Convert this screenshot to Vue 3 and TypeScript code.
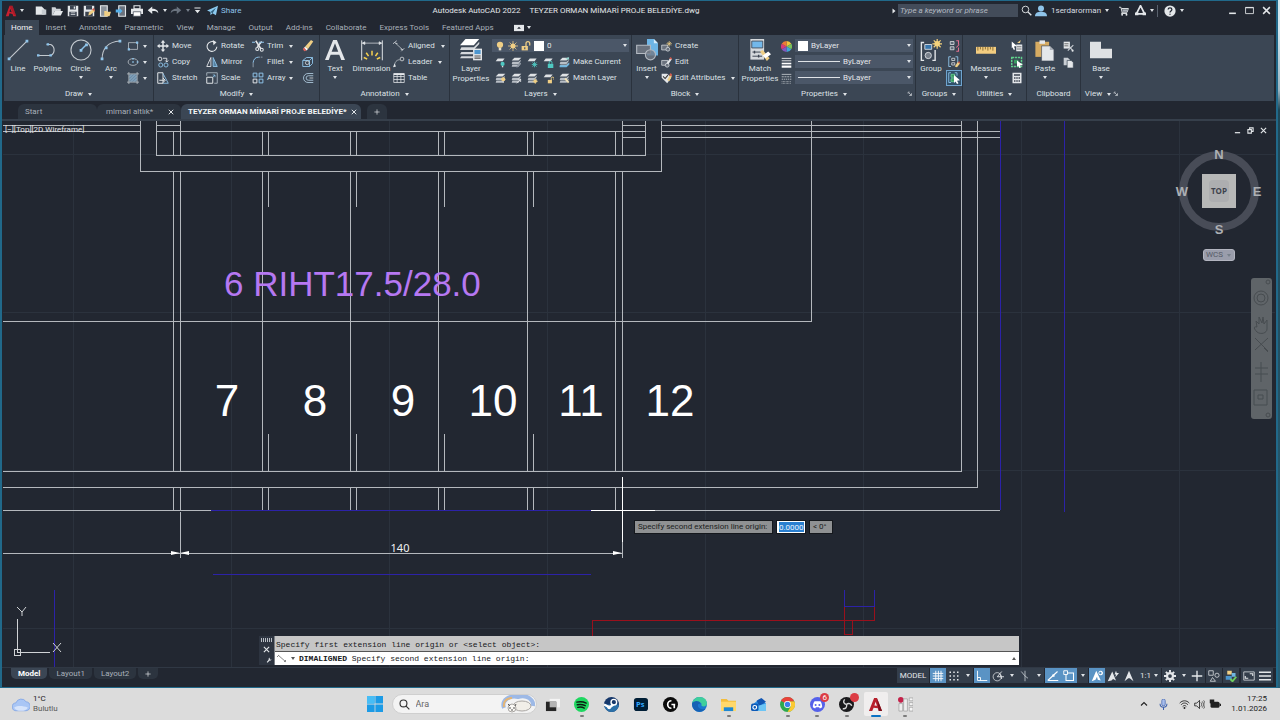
<script setup lang="ts">
import { h, ref } from 'vue'

const W = '#e4e7ea'
const B = '#8fc4ea'
const Y = '#f0cf85'

const layer = (extra: string) =>
  `<path d="M4 2h10l-3 4H1z" fill="#dfe2e5"/>${extra}`
const stack = (extra: string) =>
  `<path d="M5 1h10l-4 4H1z" fill="#dfe2e5"/><path d="M2 7h9l3-3v2l-3 4H1zM2 11h9l3-3v2l-3 4H1z" fill="#b9bfc6"/>${extra}`
const bulb = (x: number, y: number, c: string) =>
  `<circle cx="${x}" cy="${y}" r="3" fill="${c}"/><path d="M${x - 1} ${y + 3}h2v2h-2z" fill="#ddd"/>`

const icons: Record<string, string> = {
  acad: `<path d="M1 15 6 1h4l5 14h-4l-1-3-4-1-1 4z" fill="#c8202f"/><path d="M7 5l-1 4 3 .5z" fill="#222731"/><path d="M6 1h4l5 14-3-2z" fill="#8e1320" opacity=".5"/>`,
  newf: `<path d="M1 2h8l4 4v7H1z" fill="${W}"/><path d="M9 2v4h6v7H9z" fill="#c6cbd1"/>`,
  open: `<path d="M1 3h5l1 2h6v3H5l-3 6H1z" fill="#cfd3d8"/><path d="M5 8h11l-3 6H2z" fill="${W}"/>`,
  save: `<path d="M1 1h14v14H1z" fill="${W}"/><path d="M4 1h8v5H4zM3 9h10v6H3z" fill="#3b4350"/><path d="M5 10h6v1H5zM5 12h6v1H5zM9 2h2v3H9z" fill="${W}"/>`,
  saveas: `<path d="M1 1h14v14H1z" fill="${W}"/><path d="M4 1h8v5H4zM3 9h10v6H3z" fill="#3b4350"/><path d="M7 14l1-4 6-5 2 3-6 5z" fill="${Y}"/><path d="M12 6l2-2 2 3-1 1z" fill="#d35b4e"/>`,
  web: `<path d="M2 1h9v14H2z" fill="#8b939d" stroke="${W}" stroke-width="1.500"/><path d="M7 8h3l1 1h5l-2 6H7z" fill="${Y}"/>`,
  mobile: `<path d="M5 1h9v14H5z" fill="#6a727e" stroke="${W}" stroke-width="1.500"/><path d="M1 6h5V4l4 4-4 4v-2H1z" fill="#55b0ea"/>`,
  print: `<path d="M4 1h8v4H4z" fill="none" stroke="${W}" stroke-width="1.500"/><path d="M0 5h16v7H0z" fill="${W}"/><path d="M3 9h10v6H3z" fill="#fff" stroke="#444c58"/>`,
  undo: `<path d="M1 7l6-5v3c5 0 8 2 8 6-2-3-4-3-8-3v4z" fill="${W}"/>`,
  redo: `<path d="M15 7L9 2v3C4 5 1 7 1 11c2-3 4-3 8-3v4z" fill="#6a737f"/>`,
  qat: `<path d="M1 1h14v2.500H1zM2 7h12l-6 7z" fill="${W}"/>`,
  plane: `<path d="M0 8 16 1l-3 14-5-3-3 3v-5z" fill="#8ccaf0"/><path d="M5 10l8-6-5 8z" fill="#31617f"/>`,
  mag: `<circle cx="6.500" cy="6.500" r="4.800" fill="none" stroke="${W}" stroke-width="1.300"/><path d="M10 10l5 5" stroke="${W}" stroke-width="2"/>`,
  user: `<circle cx="8" cy="4.500" r="4" fill="${B}"/><path d="M0 15c0-5 4-6 8-6s8 1 8 6z" fill="${B}"/>`,
  cart: `<path d="M0 2h3l2 8h8l2-6H4M5 10l-1 2h9" fill="none" stroke="${W}" stroke-width="1.500"/><path d="M5 5h9l-1 4H6z" fill="#aab0b8"/><circle cx="5" cy="14" r="1.500" fill="${W}"/><circle cx="12" cy="14" r="1.500" fill="${W}"/>`,
  adsk: `<path d="M8 1l6 12H2z" fill="none" stroke="${W}" stroke-width="2.500"/><path d="M0 11h5v4H0zM11 11h5v4h-5z" fill="${W}"/>`,
  help: `<circle cx="8" cy="8" r="7.500" fill="${W}"/><path d="M5.500 6c0-3 5-3 5 0 0 2-2.500 2-2.500 4M8 11.500v1.500" fill="none" stroke="#222731" stroke-width="1.700"/>`,
  min: `<path d="M2 13h12" stroke="${W}" stroke-width="2.800"/>`,
  max: `<path d="M1 2.500h14v11H1z" fill="none" stroke="${W}" stroke-width="1.500"/><path d="M1 3h14" stroke="${W}" stroke-width="2"/>`,
  restore: `<path d="M2 6h8v8H2zM6 5V2h8v8h-3" fill="none" stroke="${W}" stroke-width="2.400"/>`,
  close: `<path d="M2 2l12 12M14 2L2 14" stroke="${W}" stroke-width="2.600"/>`,
  play: `<path d="M5 3l6 5-6 5z" fill="${W}"/>`,
  rib: `<path d="M0 3h16v10H0z" fill="${W}"/><path d="M5 9l3-3 3 3z" fill="#222731"/>`,
  line: `<path d="M1.500 14.500 14.500 1.500" stroke="#c3c9cf" stroke-width=".8"/><path d="M.5 13.500h2v2h-2zM13.500.5h2v2h-2z" fill="${B}"/>`,
  pline: `<path d="M1 12h9a4.500 4.500 0 0 0 0-8H7" fill="none" stroke="#c3c9cf" stroke-width=".8"/><path d="M0 11h1.800v1.800H0zM9 11h1.800v1.800H9zM7 3h1.800v1.800H7z" fill="${B}"/>`,
  circle: `<circle cx="8" cy="8" r="7.300" fill="none" stroke="#c3c9cf" stroke-width=".8"/><path d="M8 8l4-4" stroke="${B}"/><path d="M7 7.200h2v2H7zM11 3.200h2v2h-2z" fill="${B}"/>`,
  arc: `<path d="M1.500 15C1.500 7 6 2 14.500 1.500" fill="none" stroke="#c3c9cf" stroke-width=".8"/><path d="M.5 13.500h2v2h-2zM3.500 5.500h2v2h-2zM13.500.5h2v2h-2z" fill="${B}"/>`,
  rect: `<path d="M2 3.500h12v9H2z" fill="none" stroke="#c3c9cf"/><path d="M1 11h3v3H1zM12 2h3v3h-3z" fill="${B}"/>`,
  ell: `<ellipse cx="8" cy="8" rx="6.500" ry="4.500" fill="none" stroke="#c3c9cf"/><path d="M7 7h2v2H7zM7 2.500h2v2H7zM13 7h2v2h-2z" fill="${B}"/>`,
  hatch: `<path d="M3 3h10v10H3z" fill="#6d8ca6"/><path d="M3 7l4-4M3 11l8-8M5 13l8-8M9 13l4-4" stroke="#9fc4e0" stroke-width=".8"/><path d="M0 2.500h16M0 13.500h16M2.500 0v16M13.500 0v16" stroke="#c3c9cf"/>`,
  move: `<path d="M8 0l3 3.500H9V7h3.500V5L16 8l-3.500 3V9H9v3.500h2L8 16l-3-3.500h2V9H3.500v2L0 8l3.500-3v2H7V3.500H5z" fill="${W}"/>`,
  copy: `<circle cx="4" cy="4" r="2.500" fill="none" stroke="${W}" stroke-width="1.200"/><circle cx="5" cy="12" r="2.700" fill="none" stroke="${B}" stroke-width="1.200"/><circle cx="12" cy="12" r="2.700" fill="none" stroke="${B}" stroke-width="1.200"/><path d="M8 3h5v5M11 6l2 2 2-2" fill="none" stroke="${W}" stroke-width="1.200"/>`,
  stretch: `<path d="M1 1h7v14H1z" fill="none" stroke="${W}" stroke-width="1.300"/><path d="M8 2l7 13H8" fill="none" stroke="${B}" stroke-width="1.200"/><path d="M3 11h7M8 8l3 3-3 3" fill="none" stroke="${W}" stroke-width="1.300"/>`,
  rotate: `<path d="M12 3.500A6.500 6.500 0 1 0 14.500 9" fill="none" stroke="${W}" stroke-width="1.400"/><path d="M9 0l5 3-4 4z" fill="${W}"/>`,
  mirror: `<path d="M6.500 2v12H1z" fill="none" stroke="${W}" stroke-width="1.200"/><path d="M9.500 2v12H15z" fill="#55809f" stroke="${B}" stroke-width="1.200"/>`,
  scale: `<path d="M1 7h8v8H1z" fill="none" stroke="${W}" stroke-width="1.300"/><path d="M1 5V1h14v14h-4" fill="none" stroke="#a9b6c1" stroke-width="1.200"/><path d="M9 7l3-3M9 4h3v3" fill="none" stroke="${B}"/>`,
  trim: `<path d="M5 1l7 11M13 2L7 9" stroke="${W}" stroke-width="2"/><circle cx="7" cy="12" r="2" fill="none" stroke="${W}" stroke-width="1.400"/><circle cx="13" cy="13" r="2" fill="none" stroke="${W}" stroke-width="1.400"/><path d="M0 3h4M9 3h7" stroke="${B}" stroke-width="1.400"/>`,
  fillet: `<path d="M1.500 15V9" stroke="#a9b6c1"/><path d="M1.500 9C2 4 5 1.500 9 1.500" fill="none" stroke="${B}" stroke-width="1.300"/><path d="M9 1.500h6" stroke="#a9b6c1" stroke-dasharray="2 1"/>`,
  array: `<g fill="none" stroke-width="1.300"><path d="M1.500 9.500h5v5h-5z" stroke="${W}"/><path d="M1.500 1.500h5v5h-5zM9.500 1.500h5v5h-5zM9.500 9.500h5v5h-5z" stroke="${B}"/></g>`,
  erase: `<path d="M4 9l8-9 3 2-7 10z" fill="${Y}"/><path d="M2 11l2-2 4 3-2 2z" fill="#fff"/><path d="M1 12l2-2 3 4-3 1z" fill="#d9625b"/>`,
  explode: `<path d="M1 6l5-4h8v8l-4 4H1zM1 6h9v8M10 6l4-4" fill="none" stroke="${B}" stroke-width="1.200"/><circle cx="7" cy="9" r="2.500" fill="none" stroke="${W}"/>`,
  offset: `<path d="M15 2H8a6 6 0 0 0 0 12h7M15 5H8.500a3 3 0 0 0 0 6H15" fill="none" stroke="#a9c4d8" stroke-width="1.200"/><path d="M10 8h5" stroke="${W}"/>`,
  text: `<path d="M0 16 6.500 0h3L16 16h-3l-1.600-4.300H4.500L3 16zM5.300 9.300h5.300L8 2.500z" fill="${W}"/>`,
  dim: `<path d="M.5 1v14.500M15.500 1v14.500" stroke="${W}" stroke-width=".7"/><path d="M1 3h14M1 3l1.800-1v2zM15 3l-1.800-1v2z" fill="${W}" stroke="${W}" stroke-width=".5"/><path d="M8 12V8.500M5.500 12.500 3.800 10M10.500 12.500l1.700-2.500M4.500 14.500 2 13.500M11.500 14.500l2.500-1" stroke="#f5d04f" stroke-width="1.100"/>`,
  aligned: `<path d="M3 4l10 9" stroke="#c3c9cf"/><path d="M0 5l5-4M11 15l4-4M3 4l3 1M13 13l-3-1" stroke="${W}"/>`,
  leader: `<path d="M2 14C2 8 5 5 9 5" fill="none" stroke="#c3c9cf"/><path d="M0 15l2-5 2 4z" fill="${W}"/><circle cx="12" cy="4" r="2.500" fill="none" stroke="${W}"/>`,
  table: `<path d="M1 2h14v12H1zM1 6h14M1 10h14M5.500 2v12M10.500 2v12" fill="none" stroke="${W}"/><path d="M1 2h14v2H1z" fill="${W}"/>`,
  layerprop: `<path d="M4 0h10l-4 4.500H0z" fill="#fff"/><path d="M1 6h9l4-4v1.600L10 8H0zM1 9.500h8.500V11H0zM1 12.500h8.500V14H0z" fill="#d5d8dc"/><path d="M9.500 7H16v8.500H9.500z" fill="${W}"/><path d="M10.500 8h4.500v3h-4.500z" fill="#4c96cf"/><path d="M10.500 12H15v.8h-4.500zM10.500 13.500H15v.8h-4.500z" fill="#555"/>`,
  bulb: `<circle cx="8" cy="6" r="5" fill="${Y}"/><path d="M6 11h4v4H6z" fill="#e6e0cf"/>`,
  sun: `<circle cx="8" cy="8" r="4" fill="${Y}"/><path d="M8 0v16M0 8h16M2.500 2.500l11 11M13.500 2.500l-11 11" stroke="${Y}" stroke-width="1.200"/>`,
  lock: `<path d="M1 8h10v7H1z" fill="${Y}"/><path d="M8 8V4a3 3 0 0 1 6 0v3" fill="none" stroke="${Y}" stroke-width="2"/><path d="M5 10h2v3H5z" fill="#4b5768"/>`,
  l1: layer(bulb(11, 10, '#4fc9c2')),
  l2: stack(`<path d="M8 15l6-6" stroke="#8b93a0" stroke-width="2"/>`),
  l3: layer(`<path d="M11 7v8M7 11h8M8 8l6 6M14 8l-6 6" stroke="#4fc9c2" stroke-width="1.300"/>`),
  l4: layer(`<path d="M7 10h8v6H7z" fill="#4fc9c2"/><path d="M9 10V8a2 2 0 0 1 4 0v2" fill="none" stroke="#4fc9c2" stroke-width="1.400"/>`),
  l5: stack(`<path d="M1 12h10l4-4v3l-4 4H1z" fill="#6fb6e0"/><path d="M9 3l5-3 1 4z" fill="#8fd6cf"/>`),
  m1: stack(bulb(12, 9, Y)),
  m2: stack(`<path d="M8 15l6-6M10 9h4v4" stroke="#dfe2e5" fill="none" stroke-width="1.300"/>`),
  m3: stack(`<circle cx="12" cy="12" r="2.500" fill="${Y}"/><path d="M12 8v8M8 12h8" stroke="${Y}"/>`),
  m4: layer(`<path d="M7 10h6v5H7z" fill="${Y}"/><path d="M12 10V8a2 2 0 0 1 4 0v2" fill="none" stroke="${Y}" stroke-width="1.400"/>`),
  m5: stack(`<path d="M8 9l2-2 5 6-2 2z" fill="#f2e3b8"/>`),
  insert: `<path d="M8 0h5l3 3v9H8z" fill="#6db5e6"/><path d="M13 0l3 3h-3z" fill="#d4ebfa"/><path d="M.5 4.500h10v6H.5z" fill="#6a727e" stroke="#b4bac2" stroke-width=".8"/><circle cx="10.500" cy="11.500" r="3.700" fill="#737b87" fill-opacity=".8" stroke="#b4bac2" stroke-width=".8"/>`,
  create: `<path d="M1 6h9v7H1z" fill="#6a727e" stroke="${W}"/><circle cx="10" cy="12" r="2.800" fill="#6a727e" stroke="${W}"/><path d="M12 0v8M8 4h8M9.500 1.500l5 5M14.500 1.500l-5 5" stroke="${Y}"/>`,
  edit: `<path d="M1 5h9v7H1z" fill="#6a727e" stroke="${W}"/><circle cx="9" cy="12" r="2.800" fill="#6a727e" stroke="${W}"/><path d="M8 9l5-7 3 1-5 7z" fill="${W}"/><path d="M12 2l2-2 2 2-1 2z" fill="#d35b4e"/>`,
  attr: `<path d="M1 1h8l6 6-6 8-8-8z" fill="${W}"/><path d="M3 5l3 3 4-5" fill="none" stroke="#333" stroke-width="1.500"/><path d="M9 10l4-7 3 1-4 8z" fill="${Y}"/><path d="M12 3l2-3 2 2-1 3z" fill="#d35b4e"/>`,
  match: `<path d="M1 0h10v15H1z" fill="#d5d9dd"/><path d="M2 1.500h8v5H2z" fill="#73b8ea" stroke="#3b4350" stroke-width=".6"/><path d="M2.500 9.500h7M2.500 12.500h7" stroke="#3b4350" stroke-width=".7"/><path d="M4 8.500v2M7 11.500v2" stroke="#3b4350"/><path d="M8 9l2-1 5 6-2 2z" fill="${Y}"/><path d="M10 12l4-3 2 2-4 3z" fill="#fff"/>`,
  wheel: `<path d="M8 8V0a8 8 0 0 1 7 4z" fill="#f2c53d"/><path d="M8 8l7-4a8 8 0 0 1 0 8z" fill="#7ac25b"/><path d="M8 8l7 4a8 8 0 0 1-7 4z" fill="#3fa7d8"/><path d="M8 8v8a8 8 0 0 1-7-4z" fill="#8259c0"/><path d="M8 8l-7 4a8 8 0 0 1 0-8z" fill="#d83c7a"/><path d="M8 8L1 4a8 8 0 0 1 7-4z" fill="#ee7a37"/>`,
  lw: `<path d="M1 2h14M1 5.500h14" stroke="#fff" stroke-width="1.200"/><path d="M1 9.500h14" stroke="#fff" stroke-width="2.400"/><path d="M1 14h14" stroke="#fff" stroke-width="3.200"/>`,
  lt: `<path d="M1 2h14" stroke="${W}"/><path d="M1 5.500h14" stroke="${W}" stroke-dasharray="3 1"/><path d="M1 9h14" stroke="${W}" stroke-dasharray="2 1"/><path d="M1 12.500h14M1 15h14" stroke="${W}" stroke-dasharray="1 1"/>`,
  group: `<path d="M3 2.500H1v13h2M9 15.500h2V8" fill="none" stroke="${W}"/><path d="M3.500 4h5v3.500h-5z" fill="#3977ad" stroke="${W}" stroke-width=".6"/><circle cx="6" cy="12" r="2.300" fill="#78808b" stroke="${W}" stroke-width=".6"/><circle cx="12.500" cy="3.500" r="2" fill="#f5d27b"/><path d="M12.500 0v7M9 3.500h7M10 1l5 5M15 1l-5 5" stroke="#f5d27b" stroke-width=".9"/>`,
  g1: `<path d="M3 2h5v4H3zM3 9h5v4H3z" fill="#5f6b79" stroke="${W}"/><path d="M11 1h3v5M11 15h3v-5M15 6l-4 4" fill="none" stroke="#e0708f" stroke-width="1.400"/>`,
  g2: `<path d="M4 1H1v13h3M10 1h3v8" fill="none" stroke="${B}" stroke-width="1.200"/><path d="M5 3h4v3H5zM5 9h4v3H5z" fill="none" stroke="${W}"/><path d="M9 14l4-6 3 2-4 5z" fill="${Y}"/><path d="M13 8l2-1 1 2-1 1z" fill="#d35b4e"/>`,
  g3: `<path d="M4 1H1v13h3M9 1h3v4" fill="none" stroke="${B}" stroke-width="1.200"/><path d="M4 3h5v4H4zM4 9h5v4H4z" fill="#3a9b62" stroke="#6fd79a"/><path d="M8 4l8 7-4 .5 2 3.500-2 1-2-3.500-2 2z" fill="#fff"/>`,
  measure: `<path d="M0 5.500h16v5.500H0z" fill="#f3cd80"/><path d="M1.500 5.500v3M3.500 5.500v2M5.500 5.500v3M7.500 5.500v2M9.500 5.500v3M11.500 5.500v2M13.500 5.500v3" stroke="#80652e" stroke-width=".7"/>`,
  u1: `<path d="M7 6h8v9H7z" fill="${W}"/><path d="M8 9h6M8 12h6" stroke="#555"/><path d="M1 2l7 6-4 .5 1.500 4-2 .5L2 9.500 1 11z" fill="#fff"/><path d="M8 4l5-4-1 4h3" fill="${Y}"/>`,
  u2: `<path d="M1 2h13v12H1z" fill="none" stroke="#5fd08a" stroke-width="2" stroke-dasharray="3 1"/><path d="M4 5h6v5H4z" fill="#3a9b62"/><path d="M8 6l8 6-4 .5 1 3-2 .5-1-3-2 1z" fill="#fff"/>`,
  u3: `<path d="M2 1h12v14H2z" fill="${W}"/><path d="M4 3h8v2H4z" fill="#3b4350"/><path d="M4 7h2v2H4zM7 7h2v2H7zM10 7h2v2h-2zM4 11h2v2H4zM7 11h2v2H7zM10 11h2v2h-2z" fill="#3b4350"/>`,
  paste: `<path d="M1 2h10v11H1z" fill="#d6ab62"/><path d="M4 1h4v2.500H4z" fill="${W}"/><path d="M5.500 5h6l3 3v8h-9z" fill="${W}" stroke="#4a525d" stroke-width=".5"/><path d="M11.500 5v3h3z" fill="#aab0b8"/>`,
  cut: `<path d="M1 1h9v10H1z" fill="${W}"/><path d="M2 4h6M2 7h6" stroke="#555" stroke-width="1.200"/><path d="M7 5l7 9M15 6l-8 8" stroke="#c9ced4" stroke-width="1.600"/><circle cx="14" cy="14" r="1.500" fill="${W}"/>`,
  copy2: `<path d="M1 1h6l3 3v8H1z" fill="#c9ced4"/><path d="M6 5h6l3 3v8H6z" fill="${W}" stroke="#3b4654"/>`,
  base: `<path d="M0 2h8v5h8v7H0z" fill="#dfe1e3"/>`,
  sgrid: `<path d="M5 1v14M8.500 1v14M12 1v14M1 4.500h14M1 8h14M1 11.500h14" stroke="#fff" stroke-width="1.200"/>`,
  sdots: `<path d="M2 3h2M7 3h2M12 3h2M2 8h2M7 8h2M12 8h2M2 13h2M7 13h2M12 13h2" stroke="${W}" stroke-width="2"/>`,
  sortho: `<path d="M2 1v13h13M2 10h4v4" fill="none" stroke="#fff" stroke-width="1.200"/>`,
  spolar: `<circle cx="7" cy="9" r="5.500" fill="none" stroke="${W}"/><path d="M7 9h9M7 9l6-7M11 6l2 6" fill="none" stroke="${W}" stroke-width="1.200"/>`,
  siso: `<path d="M8 1v14M3 2l5 6 4 3" fill="none" stroke="#b9bfc6" stroke-width="1.200"/>`,
  strack: `<path d="M1 14 14 2M1 14h14" stroke="#fff" stroke-width="1.500"/><path d="M7 6h3v3H7z" fill="#fff"/>`,
  ssnap: `<path d="M4 4h10v10H4z" fill="none" stroke="#fff" stroke-width="1.400"/><path d="M1 1h5v5H1z" fill="#5a93c4" stroke="#fff" stroke-width="1.200"/>`,
  sa1: `<path d="M7 1l6 13-4-1-1-4-2 4-5 2zM13 1a3 3 0 1 1-.1 0" fill="#fff"/><circle cx="12.500" cy="4" r="1.600" fill="#5a93c4"/>`,
  sa2: `<path d="M7 2l5 12-4-2-2 2-5 1zM12 1l-2 5h2l-1 4 5-6h-3z" fill="${W}"/>`,
  sa3: `<path d="M8 1l6 14-5-4H7l-5 4z" fill="${W}"/>`,
  gear: `<circle cx="8" cy="8" r="4" fill="none" stroke="${W}" stroke-width="3"/><path d="M8 0v3M8 13v3M0 8h3M13 8h3M2.500 2.500l2 2M11.500 11.500l2 2M13.500 2.500l-2 2M4.500 11.500l-2 2" stroke="${W}" stroke-width="2.600"/>`,
  plus: `<path d="M8 1v14M1 8h14" stroke="${W}" stroke-width="1.800"/>`,
  sshape: `<path d="M1 1h6v6H1zM6 10l4 5H3z" fill="none" stroke="${W}"/><circle cx="12" cy="7" r="2.800" fill="none" stroke="${W}"/>`,
  shw: `<path d="M3 1h6v5H3z" fill="${Y}"/><path d="M9 4h5v5H9z" fill="#6fb6e0"/><path d="M1 8h8v5H1z" fill="#4c96cf"/><path d="M7 12l3 3 5-6" fill="none" stroke="#6fcf5f" stroke-width="2.500"/>`,
  sfull: `<path d="M1 2.500h14v11H1z" fill="none" stroke="${W}"/><path d="M9 5h4v3M7 11H3V8" fill="none" stroke="${W}" stroke-width="1.500"/>`,
  smenu: `<path d="M0 3h16M0 8h16M0 13h16" stroke="${W}" stroke-width="2"/>`,
  win: `<path d="M0 0h7.600v7.600H0zM8.400 0H16v7.600H8.400zM0 8.400h7.600V16H0zM8.400 8.400H16V16H8.400z" fill="#1c9be6"/><path d="M0 0h7.600v7.600H0z" fill="#48bdf5"/>`,
  find: `<circle cx="6.500" cy="6.500" r="5" fill="none" stroke="#333" stroke-width="1.700"/><path d="M10 10l5 5" stroke="#333" stroke-width="1.700"/>`,
  tview: `<path d="M5 2h11v9H5z" fill="#f4f4f4"/><path d="M1 5h11v10H1z" fill="#262626"/><path d="M5 5h7v6H5z" fill="#b5b5b5"/>`,
  spotify: `<circle cx="8" cy="8" r="8" fill="#1ed760"/><path d="M3 5.500c4-1 7-.5 10 1M3.500 8.300c3.500-.8 6-.3 8.500 1M4 11c3-.7 5-.3 7 .8" fill="none" stroke="#0c1a10" stroke-width="1.500" stroke-linecap="round"/>`,
  steam: `<circle cx="8" cy="8" r="8" fill="#16386b"/><path d="M0 8h16a8 8 0 0 1-16 0" fill="#2c70a8"/><circle cx="10.500" cy="5.500" r="3" fill="none" stroke="#fff" stroke-width="1.500"/><path d="M0 8l6 3 4-3" fill="none" stroke="#fff" stroke-width="2.500"/><circle cx="5.500" cy="11" r="2" fill="#fff"/>`,
  ps: `<rect x="1" y="1" width="15" height="14" rx="3" fill="#001e36"/><text x="3.200" y="11" font-family="Open Sans, sans-serif" font-weight="700" font-size="8" fill="#31a8ff">Ps</text>`,
  ghub: `<circle cx="8" cy="8" r="8" fill="#0b0b0b"/><path d="M9 4a4 4 0 1 0 0 8M9 8h3v4M9 8h4" fill="none" stroke="#fff" stroke-width="1.800"/>`,
  edge: `<circle cx="8" cy="8" r="8" fill="#1b78cf"/><path d="M0 7C1 2 5 0 8 0c5 0 8 3 8 7 0 3-4 4-6 2 1-3-2-4-4-3-3 0-5 0-6 1" fill="#3fcf9c"/><path d="M0 7c1-3 8-4 9 0-4 0-4 5 2 6 2 0 3 0 4-1-4 6-15 5-15-5" fill="#1562b5"/>`,
  folder: `<path d="M0 2h6l2 2h8v11H0z" fill="#f3bd3c"/><path d="M0 5h16v10H0z" fill="#ffd86b"/><path d="M3 11h10v4H3z" fill="#1d87d4"/>`,
  outlook: `<path d="M3 7l6-5 7 5v8H3z" fill="#2d8fe5"/><path d="M6 4l5-3 5 4-7 5z" fill="#1257b4"/><path d="M5 10l11-3v8H5z" fill="#6cc5f5"/><rect y="7" width="8" height="8" rx="2" fill="#0c59b7"/><circle cx="4" cy="11" r="2" fill="none" stroke="#fff" stroke-width="1.200"/>`,
  chrome: `<circle cx="8" cy="8" r="8" fill="#2da94f"/><path d="M8 4.500h7.300A8 8 0 0 1 8 16l3.500-6z" fill="#fcc934"/><path d="M8 8L1 4a8 8 0 0 1 14 .5H8z" fill="#e8423a"/><circle cx="8" cy="8" r="3.700" fill="#fff"/><circle cx="8" cy="8" r="2.900" fill="#3f7fea"/>`,
  discord: `<circle cx="8" cy="8" r="8" fill="#5561ea"/><path d="M3 11c0-3 1-6 2-6.500h6c1 .5 2 3.500 2 6.500l-2.500 1.200-.8-1.200H6.300l-.8 1.200z" fill="#fff"/><circle cx="6" cy="8.500" r="1.100" fill="#5561ea"/><circle cx="10" cy="8.500" r="1.100" fill="#5561ea"/>`,
  obs: `<circle cx="8" cy="8" r="8" fill="#1a1a1c"/><path d="M8 8c-3-1-4-3-2-5.500M8 8c2-2 5-1 5.500 1.500M8 8c1 3-1 5-4 4.500" fill="none" stroke="#d8d8d8" stroke-width="1.500"/>`,
  acadbar: `<path d="M1 15 6.500 1h3L15 15h-3.500l-1-3-4.500-.5L4.500 15zM8 5L6.800 9l2.800.4z" fill="#b8202c" fill-rule="evenodd"/><path d="M9.500 1 15 15h-3.500z" fill="#7d0f1b"/>`,
  tool: `<circle cx="3" cy="3" r="3" fill="#c4224a"/><path d="M1 7h4v8H1zM6 2h4v13H6z" fill="#eee" stroke="#999" stroke-width=".7"/><path d="M12 1h4v3h-4zM12 6h4v3h-4zM12 11h4v4h-4z" fill="#f5f5f5" stroke="#999" stroke-width=".7"/>`,
  up: `<path d="M2 11l6-6 6 6" fill="none" stroke="#222" stroke-width="2.200"/>`,
  mic: `<rect x="5.500" y="0" width="5" height="10" rx="2.500" fill="#a7bdec" stroke="#3b5fae"/><path d="M3 7a5 5 0 0 0 10 0M8 12v4" fill="none" stroke="#3b5fae" stroke-width="1.500"/>`,
  wifi: `<path d="M1 6c4-4.500 10-4.500 14 0M3 8.500c3-3.500 7-3.500 10 0M5.300 11c2-2 3.500-2 5.400 0" fill="none" stroke="#222" stroke-width="1.300"/><circle cx="8" cy="13" r="1.400" fill="#222"/>`,
  vol: `<path d="M1 6h3l4-4v12l-4-4H1z" fill="none" stroke="#222" stroke-width="1.200"/><path d="M10 5c1.500 2 1.500 4 0 6M12 3.500c2.500 3 2.500 6 0 9M14 2c3 4 3 8 0 12" fill="none" stroke="#222"/>`,
  bat: `<rect x="2" y="5" width="12" height="8" rx="2" fill="#222"/><path d="M14 7.500h2v3h-2zM1 2h6v5H1z" fill="#222"/>`,
  cloud: `<path d="M4 14a3.500 3.500 0 0 1-.5-7A5 5 0 0 1 12.500 6 4 4 0 0 1 12 14z" fill="#a9c6f5" stroke="#7da2e4" stroke-width=".7"/><path d="M2 11c4-2 8-1 12 0-1 4-11 4-12 0" fill="#d6e4fb"/>`,
  launch: `<path d="M3 3h4M3 3v4M5 5l6 6M12 6v6H6" fill="none" stroke="${W}" stroke-width="1.700"/>`,
  wrench: `<path d="M10 1L7 4v3l-5 6 2 2 6-6 3 0 2-3-3 1-2-2z" fill="${W}"/>`,
}

const Icon = (p: { n: string; s?: number }) =>
  h('svg', { class: 'ico', width: p.s ?? 12, height: p.s ?? 12, viewBox: '0 0 16 16', 'aria-hidden': 'true', innerHTML: icons[p.n] })
Icon.props = ['n', 's']

interface Tool { i: string; t?: string; c?: boolean; on?: boolean }

const quick = ['newf', 'open', 'save', 'saveas', 'web', 'mobile', 'print']
const ribbonTabs = ['Home', 'Insert', 'Annotate', 'Parametric', 'View', 'Manage', 'Output', 'Add-ins', 'Collaborate', 'Express Tools', 'Featured Apps']
const drawSmall: Tool[] = [{ i: 'rect' }, { i: 'ell' }, { i: 'hatch' }]
const modify: Tool[][] = [
  [{ i: 'move', t: 'Move' }, { i: 'copy', t: 'Copy' }, { i: 'stretch', t: 'Stretch' }],
  [{ i: 'rotate', t: 'Rotate' }, { i: 'mirror', t: 'Mirror' }, { i: 'scale', t: 'Scale' }],
  [{ i: 'trim', t: 'Trim', c: true }, { i: 'fillet', t: 'Fillet', c: true }, { i: 'array', t: 'Array', c: true }],
  [{ i: 'erase' }, { i: 'explode' }, { i: 'offset' }],
]
const annot: Tool[] = [{ i: 'aligned', t: 'Aligned', c: true }, { i: 'leader', t: 'Leader', c: true }, { i: 'table', t: 'Table' }]
const layerRows: Tool[][] = [
  [{ i: 'l1' }, { i: 'l2' }, { i: 'l3' }, { i: 'l4' }, { i: 'l5', t: 'Make Current' }],
  [{ i: 'm1' }, { i: 'm2' }, { i: 'm3' }, { i: 'm4' }, { i: 'm5', t: 'Match Layer' }],
]
const block: Tool[] = [{ i: 'create', t: 'Create' }, { i: 'edit', t: 'Edit' }, { i: 'attr', t: 'Edit Attributes', c: true }]
const groups: Tool[] = [{ i: 'g1' }, { i: 'g2' }, { i: 'g3', on: true }]
const utils: Tool[] = [{ i: 'u1' }, { i: 'u2' }, { i: 'u3' }]
const clip: Tool[] = [{ i: 'cut' }, { i: 'copy2' }]

type Status = { k: 'icon' | 'caret' | 'sep' | 'text'; i?: string; on?: boolean; t?: string }
const ic = (i: string, on = false): Status => ({ k: 'icon', i, on })
const caret: Status = { k: 'caret' }
const sep: Status = { k: 'sep' }
const status: Status[] = [
  { k: 'text', t: 'MODEL' }, sep, ic('sgrid', true), ic('sdots'), caret, sep, ic('sortho', true), ic('spolar'), caret,
  ic('siso'), caret, sep, ic('strack', true), ic('ssnap', true), caret, sep, ic('sa1', true), ic('sa2'), ic('sa3'),
  { k: 'text', t: '1:1' }, sep, ic('gear'), caret, ic('plus'), sep, ic('sshape'), sep, ic('shw'), sep, sep, ic('sfull'), ic('smenu'),
]

const apps = [
  { i: 'tview' }, { i: 'spotify', run: true }, { i: 'steam' }, { i: 'ps' }, { i: 'ghub' }, { i: 'edge' },
  { i: 'folder', run: true }, { i: 'outlook' }, { i: 'chrome', run: true }, { i: 'discord', run: true, badge: '6' },
  { i: 'obs', run: true, badge: ' ' }, { i: 'acadbar', run: true, active: true }, { i: 'tool', run: true },
]

const gridX = [73, 231, 389, 547, 705, 863, 1021, 1179]
const gridY = [154, 312, 470, 628]
const treads = [262, 350, 438, 527]
const stepNumbers = [
  { t: '7', x: 227 }, { t: '8', x: 315 }, { t: '9', x: 403 }, { t: '10', x: 493 }, { t: '11', x: 581 }, { t: '12', x: 670 },
]
const search = ref('')
const distance = ref('0.0000')
</script>

<template>
  <div class="desktop">
    <div class="window">
      <header class="titlebar">
        <div class="quick">
          <button class="logo" aria-label="Application menu"><Icon n="acad" :s="12" /><i class="caret"></i></button>
          <button v-for="q in quick" :key="q" class="qb" :aria-label="q"><Icon :n="q" :s="12" /></button>
          <button class="qb wide" aria-label="Undo"><Icon n="undo" :s="12" /><i class="caret"></i></button>
          <button class="qb wide" aria-label="Redo"><Icon n="redo" :s="12" /><i class="caret dim"></i></button>
          <button class="qb slim" aria-label="Customize"><Icon n="qat" :s="7" /></button>
          <button class="share"><Icon n="plane" :s="11" />Share</button>
        </div>
        <div class="title"><span>Autodesk AutoCAD 2022</span><span>TEYZER ORMAN MİMARİ PROJE BELEDİYE.dwg</span></div>
        <div class="account">
          <Icon n="play" :s="8" />
          <input v-model="search" class="help-search" aria-label="Search help" placeholder="Type a keyword or phrase" />
          <button class="tb-i" aria-label="Search"><Icon n="mag" :s="11" /></button>
          <button class="user"><Icon n="user" :s="12" /><span>1serdarorman</span><i class="caret"></i></button>
          <button class="tb-i" aria-label="Store"><Icon n="cart" :s="10" /></button>
          <button class="tb-c" aria-label="Apps"><Icon n="adsk" :s="11" /><i class="caret"></i></button>
          <span class="vsep"></span>
          <button class="tb-c" aria-label="Help"><Icon n="help" :s="12" /><i class="caret"></i></button>
          <div class="wbtns">
            <button aria-label="Minimize"><Icon n="min" :s="9" /></button>
            <button aria-label="Maximize"><Icon n="max" :s="9" /></button>
            <button aria-label="Close"><Icon n="close" :s="9" /></button>
          </div>
        </div>
      </header>

      <nav class="tabs">
        <button v-for="(t, n) in ribbonTabs" :key="t" :class="{ on: n === 0 }">{{ t }}</button>
        <button class="ribtoggle" aria-label="Minimize ribbon"><Icon n="rib" :s="10" /><i class="caret"></i></button>
      </nav>

      <section class="ribbon">
        <div class="panel">
          <div class="body draw">
            <button class="big"><Icon n="line" :s="22" />Line</button>
            <button class="big"><Icon n="pline" :s="22" />Polyline</button>
            <button class="big"><Icon n="circle" :s="22" />Circle<i class="caret"></i></button>
            <button class="big"><Icon n="arc" :s="22" />Arc<i class="caret"></i></button>
            <div class="col">
              <button v-for="d in drawSmall" :key="d.i" class="small" :aria-label="d.i"><Icon :n="d.i" /><i class="caret"></i></button>
            </div>
          </div>
          <div class="ptitle"><span>Draw<i class="caret"></i></span></div>
        </div>
        <div class="panel">
          <div class="body modify">
            <div v-for="(c, n) in modify" :key="n" class="col">
              <button v-for="d in c" :key="d.i" class="small" :aria-label="d.t ?? d.i"><Icon :n="d.i" />{{ d.t }}<i v-if="d.c" class="caret"></i></button>
            </div>
          </div>
          <div class="ptitle"><span>Modify<i class="caret"></i></span></div>
        </div>
        <div class="panel">
          <div class="body annot">
            <button class="big"><Icon n="text" :s="20" />Text<i class="caret"></i></button>
            <button class="big"><Icon n="dim" :s="22" />Dimension</button>
            <div class="col">
              <button v-for="d in annot" :key="d.i" class="small"><Icon :n="d.i" />{{ d.t }}<i v-if="d.c" class="caret"></i></button>
            </div>
          </div>
          <div class="ptitle"><span>Annotation<i class="caret"></i></span></div>
        </div>
        <div class="panel">
          <div class="body layers">
            <button class="big"><Icon n="layerprop" :s="22" />Layer<br />Properties</button>
            <div class="col">
              <label class="combo">
                <Icon n="bulb" :s="10" /><Icon n="sun" :s="10" /><Icon n="lock" :s="10" /><i class="swatch"></i>
                <select aria-label="Layer"><option>0</option></select><i class="caret"></i>
              </label>
              <div v-for="(r, n) in layerRows" :key="n" class="lrow">
                <button v-for="d in r" :key="d.i" class="small" :aria-label="d.t ?? d.i"><Icon :n="d.i" :s="11" />{{ d.t }}</button>
              </div>
            </div>
          </div>
          <div class="ptitle"><span>Layers<i class="caret"></i></span></div>
        </div>
        <div class="panel">
          <div class="body block">
            <button class="big"><Icon n="insert" :s="22" />Insert<i class="caret"></i></button>
            <div class="col">
              <button v-for="d in block" :key="d.i" class="small"><Icon :n="d.i" :s="11" />{{ d.t }}<i v-if="d.c" class="caret"></i></button>
            </div>
          </div>
          <div class="ptitle"><span>Block<i class="caret"></i></span></div>
        </div>
        <div class="panel">
          <div class="body props">
            <button class="big"><Icon n="match" :s="22" />Match<br />Properties</button>
            <div class="col icons">
              <Icon n="wheel" :s="11" /><Icon n="lw" :s="11" /><Icon n="lt" :s="11" />
            </div>
            <div class="col">
              <label class="combo"><i class="swatch"></i><select aria-label="Color"><option>ByLayer</option></select><i class="caret"></i></label>
              <label class="combo"><i class="rule"></i><select aria-label="Lineweight"><option>ByLayer</option></select><i class="caret"></i></label>
              <label class="combo"><i class="rule"></i><select aria-label="Linetype"><option>ByLayer</option></select><i class="caret"></i></label>
            </div>
          </div>
          <div class="ptitle"><span>Properties<i class="caret"></i></span><Icon n="launch" :s="6" /></div>
        </div>
        <div class="panel">
          <div class="body grp">
            <button class="big"><Icon n="group" :s="22" />Group</button>
            <div class="col">
              <button v-for="d in groups" :key="d.i" class="small" :class="{ sel: d.on }" :aria-label="d.i"><Icon :n="d.i" /></button>
            </div>
          </div>
          <div class="ptitle"><span>Groups<i class="caret"></i></span></div>
        </div>
        <div class="panel">
          <div class="body util">
            <button class="big"><Icon n="measure" :s="20" />Measure<i class="caret"></i></button>
            <div class="col">
              <button v-for="d in utils" :key="d.i" class="small" :aria-label="d.i"><Icon :n="d.i" /></button>
            </div>
          </div>
          <div class="ptitle"><span>Utilities<i class="caret"></i></span></div>
        </div>
        <div class="panel">
          <div class="body clip">
            <button class="big"><Icon n="paste" :s="22" />Paste<i class="caret"></i></button>
            <div class="col">
              <button v-for="d in clip" :key="d.i" class="small" :aria-label="d.i"><Icon :n="d.i" :s="11" /></button>
            </div>
          </div>
          <div class="ptitle"><span>Clipboard</span></div>
        </div>
        <div class="panel last">
          <div class="body">
            <button class="big"><Icon n="base" :s="22" />Base<i class="caret"></i></button>
          </div>
          <div class="ptitle"><span>View<i class="caret"></i></span><Icon n="launch" :s="6" /></div>
        </div>
      </section>

      <nav class="files">
        <button class="ftab start">Start</button>
        <button class="ftab mid">mimari altlık*<Icon n="close" :s="6" /></button>
        <button class="ftab on">TEYZER ORMAN MİMARİ PROJE BELEDİYE*<Icon n="close" :s="6" /></button>
        <button class="ftab add" aria-label="New drawing"><Icon n="plus" :s="6" /></button>
      </nav>

      <main class="canvas">
        <svg class="drawing" width="100%" height="100%" shape-rendering="crispEdges">
          <g transform="translate(-2 -121)">
            <g class="grid">
              <path v-for="x in gridX" :key="'x' + x" :d="`M${x} 121V667`" />
              <path v-for="y in gridY" :key="'y' + y" :d="`M3 ${y}H1275`" />
            </g>
            <g class="wall">
              <path d="M3 125H140M156 125H180M3 131H140M156 131H645M622 125H645M622 137H645M661 131H1000M661 137H1000M661 125H961" />
              <path d="M140 121V171H661V121M156 121V155H645V121" />
              <path d="M173 131V155M180 121V155M173 171V471M180 171V471M173 487V510M180 487V510" />
              <path v-for="x in treads" :key="x" :d="`M${x} 131V155M${x + 6} 131V155M${x} 171V471M${x + 6} 171V207M${x + 6} 434V471M${x} 487V510M${x + 6} 487V510`" />
              <path d="M615 131V155M622 121V155M615 171V471M622 171V471M615 487V510M622 487V510" />
              <path d="M3 321H811V121M3 471H961V121M3 487H977V121M3 510H211M591 510H1000" />
              <path d="M3 553H622M180 512V558M622 510V558" />
            </g>
            <path class="cursor" d="M590 510H655M622 477V542" />
            <path class="blue" d="M211 510H591M1000 121V510M1064 121V512" />
            <path class="blue" d="M213 574H591M54 590V667" />
            <path class="red" d="M592 636V620H874V606M844 606V634H852V620" />
            <path class="blue" d="M844 590V606H874V590" />
            <path class="head" shape-rendering="auto" d="M180 553l-9-2v4zM180 553l9-2v4zM622 553l-9-2v4z" />
            <text class="rise" x="224" y="296">6 RIHT17.5/28.0</text>
            <text v-for="s in stepNumbers" :key="s.t" class="num" :x="s.x" y="416">{{ s.t }}</text>
            <text class="dimt" x="400" y="552">140</text>
            <path class="ucs" d="M17 619V652H50M14 649h6v6h-6z" />
            <path class="ucs" shape-rendering="auto" d="M17 607l5 5 4-5M22 612v4M53 643l8 9M61 643l-8 9" />
          </g>
        </svg>

        <span class="vlabel">[−][Top][2D Wireframe]</span>

        <div class="vbtns">
          <button aria-label="Minimize drawing"><Icon n="min" :s="7" /></button>
          <button aria-label="Restore drawing"><Icon n="restore" :s="7" /></button>
          <button aria-label="Close drawing"><Icon n="close" :s="7" /></button>
        </div>

        <div class="compass">
          <svg width="90" height="90" viewBox="0 0 90 90">
            <circle cx="45" cy="45" r="36" fill="none" stroke="#484c57" stroke-width="8" />
            <rect x="28" y="28" width="34" height="34" fill="#b7b8b7" />
            <rect x="35" y="34" width="20" height="22" rx="4" fill="#adaeb0" />
            <text class="nsew" x="45" y="13">N</text>
            <text class="nsew" x="45" y="88">S</text>
            <text class="nsew" x="8" y="50">W</text>
            <text class="nsew" x="83" y="50">E</text>
            <text class="top" x="45" y="48">TOP</text>
          </svg>
          <button class="wcs">WCS<i class="caret dim"></i></button>
        </div>

        <div class="navbar">
          <svg width="21" height="141" viewBox="0 0 21 141" fill="none" stroke="#474c50" stroke-width="1">
            <circle cx="17" cy="4" r="2" /><circle cx="17" cy="137" r="2" />
            <circle cx="10" cy="20" r="7" /><circle cx="10" cy="20" r="4" />
            <path d="M6 54c-3-3-4-6 0-5l-1-6 3 3V39l3 6 1-6 1 7 3-4v9c0 4-6 6-10 3M4 60l13 13M17 60L4 72M13 70l4 4M10 84v20M4 90h13M4 96h13M3 112h13v15H3zM7 117h5v4H7z" />
          </svg>
        </div>

        <div class="prompt">
          <label class="ptext" for="dist">Specify second extension line origin:</label>
          <input id="dist" v-model="distance" class="pval" />
          <span class="pang">&lt; 0°</span>
        </div>

        <div class="cmd">
          <div class="grip"><i class="dots"></i><button aria-label="Close command line"><Icon n="close" :s="7" /></button><Icon n="wrench" :s="6" /></div>
          <div class="lines">
            <div class="hist">Specify first extension line origin or &lt;select object&gt;:</div>
            <div class="entry">
              <svg width="10" height="9" viewBox="0 0 10 9"><path d="M1 1l8 7M0 3l2-2M7 8l2-2" fill="none" stroke="#888" /></svg>
              <i class="caret dark"></i><span><b>DIMALIGNED</b> Specify second extension line origin:</span><i class="upc"></i>
            </div>
          </div>
        </div>
      </main>

      <footer class="statusbar">
        <nav class="layouts">
          <button class="on">Model</button><button>Layout1</button><button>Layout2</button><button aria-label="New layout"><Icon n="plus" :s="6" /></button>
        </nav>
        <div class="status">
          <template v-for="(s, n) in status" :key="n">
            <i v-if="s.k === 'sep'" class="ssep"></i>
            <button v-else-if="s.k === 'caret'" class="sc" aria-label="Options"><i class="caret"></i></button>
            <button v-else-if="s.k === 'text'" class="st" :class="{ ratio: s.t === '1:1' }">{{ s.t }}<i v-if="s.t === '1:1'" class="caret"></i></button>
            <button v-else class="si" :class="{ on: s.on }" :aria-label="s.i"><Icon :n="s.i ?? ''" :s="12" /></button>
          </template>
        </div>
      </footer>
    </div>

    <footer class="taskbar">
      <button class="weather"><Icon n="cloud" :s="18" /><span>1°C<small>Bulutlu</small></span></button>
      <div class="center">
        <button class="startb" aria-label="Start"><Icon n="win" :s="16" /></button>
        <label class="search">
          <Icon n="find" :s="11" />
          <input placeholder="Ara" aria-label="Ara" />
          <svg class="pic" width="34" height="18" viewBox="0 0 34 18">
            <path d="M3 13C0 5 9 0 17 2c9-3 16 3 15 9" fill="none" stroke="#9db9e6" stroke-width="4" />
            <path d="M3 12C2 6 6 3 11 3" fill="none" stroke="#e5b574" stroke-width="2" />
            <ellipse cx="21" cy="11" rx="9" ry="5" fill="#f1eee8" stroke="#a9a6a3" />
            <circle cx="11" cy="13" r="4" fill="#faf8f4" stroke="#a9a6a3" /><path d="M8 13h2M12 13h2M10 15h2M7 9l2 2M15 9l-1 2" stroke="#555" />
          </svg>
        </label>
        <div class="apps">
          <button v-for="a in apps" :key="a.i" class="app" :class="{ active: a.active, run: a.run }" :aria-label="a.i">
            <Icon :n="a.i" :s="15" /><span v-if="a.badge" class="badge">{{ a.badge }}</span>
          </button>
        </div>
      </div>
      <div class="tray">
        <button aria-label="Hidden icons"><Icon n="up" :s="8" /></button>
        <button class="mic" aria-label="Microphone"><Icon n="mic" :s="11" /></button>
        <button aria-label="Network"><Icon n="wifi" :s="11" /></button>
        <button aria-label="Volume"><Icon n="vol" :s="11" /></button>
        <button aria-label="Battery"><Icon n="bat" :s="12" /></button>
        <time>17:25<br />1.01.2026</time>
      </div>
    </footer>
  </div>
</template>

<style>
body { margin: 0; background: #222731; }
svg.ico { flex: none; display: block; }
</style>

<style scoped>
.desktop {
  height: 100vh;
  min-height: 400px;
  display: flex;
  flex-direction: column;
  font: 8px/10px Roboto, "Noto Sans", sans-serif;
  color: #d9dde1;
  background: linear-gradient(#d3e6ee 0, #d3e6ee 30px, #9db6c2 90px, #1f4656 110px, #2a6077 100%);
  overflow: hidden;
}
* { box-sizing: border-box; }
button, input, select {
  font: inherit;
  color: inherit;
  background: none;
  border: 0;
  padding: 0;
  margin: 0;
  min-width: 0;
}
button { display: flex; align-items: center; white-space: nowrap; }
.window {
  flex: 1;
  min-height: 0;
  margin-right: 2px;
  display: flex;
  flex-direction: column;
  background: #222731;
  border: solid #21698a;
  border-width: 1px 2px 1px 2px;
}
.caret {
  flex: none;
  width: 0;
  height: 0;
  border: 2px solid transparent;
  border-top: 3px solid #dfe3e7;
  border-bottom: 0;
}
.caret.dim { border-top-color: #77808b; }
.caret.dark { border-top-color: #555; }

.titlebar { flex: none; height: 19px; display: flex; align-items: center; }
.quick, .account { display: flex; align-items: center; }
.quick { width: 240px; }
.logo { gap: 3px; width: 31px; padding-left: 3px; }
.qb { width: 16px; height: 16px; justify-content: center; }
.qb.wide { width: 23px; gap: 4px; justify-content: flex-start; padding-left: 2px; }
.qb.slim { width: 13px; }
.share { gap: 3px; color: #8fc4ea; margin-left: 3px; }
.title { flex: 1; display: flex; justify-content: center; gap: 9px; color: #e3e6e9; white-space: nowrap; }
.account { width: 386px; }
.help-search {
  width: 120px;
  height: 13px;
  padding: 0 2px;
  background: #434c5a;
  font-style: italic;
}
.help-search::placeholder { color: #b3b9c1; opacity: 1; }
.tb-i { width: 17px; justify-content: center; }
.user { width: 80px; gap: 4px; }
.user span { flex: 1; text-align: left; }
.user .caret { margin-right: 10px; }
.tb-c { gap: 4px; width: 22px; padding-left: 3px; }
.vsep { width: 1px; height: 12px; background: #59616d; margin: 0 3px; }
.wbtns { display: flex; flex: 1; justify-content: flex-end; gap: 8px; padding-right: 5px; }

.tabs { flex: none; height: 15px; display: flex; align-items: stretch; gap: 1px; padding-left: 3px; color: #a9b0b9; }
.tabs button { padding: 0 6px; }
.tabs .on { background: #3b4654; color: #f1f3f5; }
.tabs .ribtoggle { padding-left: 13px; gap: 3px; }

.ribbon {
  flex: none;
  height: 66px;
  margin: 0 2px;
  display: grid;
  grid-template-columns: 150px 166px 130px 182px 107px 177px 47px 64px 54px 40px;
  background: #3b4654;
  color: #dde1e5;
}
.panel { border-right: 1px solid #2a323d; display: flex; flex-direction: column; min-width: 0; }
.panel.last { border: 0; }
.body { height: 52px; display: grid; padding-top: 3px; grid-auto-rows: 48px; }
.ptitle { height: 14px; display: flex; align-items: center; justify-content: center; padding: 0 2px; }
.ptitle span { display: flex; align-items: center; gap: 5px; margin: 0 auto; }
.big { flex-direction: column; justify-content: flex-start; gap: 0; padding-top: 1px; line-height: 10px; text-align: center; }
.big .ico { margin: 0 0 3px; height: 22px; }
.big .caret { margin-top: 2px; }
.col { display: grid; grid-auto-rows: 16px; min-width: 0; }
.small { gap: 3px; height: 16px; }
.draw { grid-template-columns: 28px 31px 35px 26px 26px; }
.draw .col { padding-left: 3px; }
.draw .small { gap: 4px; }
.modify { grid-template-columns: 49px 46px 50px 18px; padding-left: 3px; }
.modify .small { width: 41px; }
.modify .small .caret { margin-left: auto; }
.annot { grid-template-columns: 30px 43px 54px; }
.annot .small .caret { margin-left: 3px; }
.layers { grid-template-columns: 42px 137px; }
.lrow { display: grid; grid-template-columns: repeat(4, 16px) 1fr; padding-left: 3px; }
.combo {
  position: relative;
  height: 13px;
  margin: 1px 0;
  display: flex;
  align-items: center;
  gap: 3px;
  padding: 0 2px 0 3px;
  background: #4b5768;
}
.combo select { flex: 1; appearance: none; height: 13px; color: #e3e6e9; }
.combo option { color: #222; }
.swatch { width: 10px; height: 10px; background: #fff; flex: none; }
.rule { width: 42px; height: 1px; background: #dfe3e7; flex: none; }
.block { grid-template-columns: 29px 76px; }
.block .small .caret { margin-left: auto; margin-right: 2px; }
.props { grid-template-columns: 42px 14px 118px; }
.props .icons { align-items: center; }
.grp { grid-template-columns: 30px 16px; }
.grp .small, .util .small { justify-content: center; }
.sel { background: #31506a; outline: 1px solid #6fa4cf; outline-offset: -1px; }
.util { grid-template-columns: 46px 16px; }
.clip { grid-template-columns: 36px 14px; }

.files { flex: none; height: 20px; padding: 3px 0 0 16px; display: flex; border-bottom: 2px solid #363f4b; color: #a9b0b9; }
.ftab { height: 15px; background: #2c343f; border-radius: 6px 6px 0 0; padding: 0 7px; }
.start { width: 79px; }
.mid { width: 84px; padding-left: 9px; }
.mid .ico { margin-left: auto; }
.ftab.on { width: 180px; background: #3b4654; color: #f4f6f7; font-weight: 700; justify-content: space-between; padding-right: 4px; }
.add { margin-left: 6px; }

.canvas { flex: 1; min-height: 0; position: relative; overflow: hidden; }
.drawing { display: block; }
.drawing path { fill: none; stroke-width: 1; }
.grid { stroke: #2b323d; }
.wall { stroke: #b4b8bd; }
.cursor { stroke: #fff; }
.blue { stroke: #2c22a8; }
.red { stroke: #9a101c; }
.drawing .head { fill: #fff; }
.ucs { stroke: #d0d3d6; }
.rise { font: 35px "Liberation Sans", Arial, sans-serif; fill: #b678f2; }
.num { font: 44px "Liberation Sans", Arial, sans-serif; fill: #fff; text-anchor: middle; }
.dimt { font: 11px "Noto Sans", sans-serif; fill: #f0f1f2; text-anchor: middle; }
.vlabel { position: absolute; left: 3px; top: 4px; color: #e4e6e8; }
.vbtns { position: absolute; right: 9px; top: 6px; display: flex; gap: 6px; }
.compass { position: absolute; right: 12px; top: 25px; display: flex; flex-direction: column; align-items: center; gap: 13px; }
.compass svg { display: block; }
.nsew { font: 700 13px "Liberation Sans", Arial, sans-serif; fill: #adb0b4; text-anchor: middle; }
.top { font: 700 8px "Open Sans", sans-serif; fill: #3d424c; text-anchor: middle; }
.wcs { width: 32px; height: 12px; border-radius: 3px; background: #9a9dab; border: 1px solid #b3b5c0; color: #555a66; padding: 0 3px 0 2px; justify-content: space-between; }
.navbar { position: absolute; right: 4px; top: 157px; border-radius: 3px; background: #5f6468; height: 141px; }
.prompt { position: absolute; left: 632px; top: 399px; display: flex; gap: 3px; }
.ptext, .pang, .pval { height: 14px; line-height: 12px; border: 1px solid #15181d; background: #8f9193; color: #1b1d20; white-space: nowrap; }
.ptext { min-width: 139px; padding: 0 3px; }
.pval { width: 30px; padding: 0; background: linear-gradient(#2a7fd0, #2a7fd0) 2px 1px / 25px 10px no-repeat #fff; color: #e9f3fc; text-indent: 2px; }
.pang { width: 24px; padding: 0 3px; }
.cmd { position: absolute; left: 50%; bottom: 2px; width: 760px; margin-left: -380px; display: flex; height: 29px; font: 8px/10px "Liberation Mono", monospace; color: #16181b; }
.grip { width: 15px; background: #2d3440; display: flex; flex-direction: column; align-items: center; gap: 4px; padding-top: 2px; }
.grip > svg { margin-left: 5px; }
.dots { width: 11px; height: 4px; background: repeating-linear-gradient(90deg, #b9bec5 0 1px, transparent 1px 2px); }
.lines { flex: 1; min-width: 0; border: 1px solid #7b7f85; border-width: 0 0 0 1px; }
.hist { height: 16px; padding: 4px 1px 0; background: #c6c6c6; border-bottom: 1px solid #555; white-space: nowrap; }
.entry { height: 13px; background: #fff; display: flex; align-items: center; gap: 4px; padding: 0 3px 0 2px; white-space: nowrap; }
.entry span { flex: 1; }
.upc { border: 2px solid transparent; border-bottom: 3px solid #555; border-top: 0; }

.statusbar { flex: none; height: 20px; display: flex; justify-content: space-between; border-top: 1px solid #303844; }
.layouts { display: flex; padding-left: 9px; gap: 2px; }
.layouts button { height: 11px; padding: 0 7px; background: #2c343f; border-radius: 0 0 5px 5px; color: #a9b0b9; }
.layouts .on { background: #3b4654; color: #fff; font-weight: 700; }
.status { display: flex; align-items: flex-start; padding: 0 3px 0 0; color: #e4e7ea; }
.status button { height: 15px; background: #343e4b; justify-content: center; }
.st { width: 32px; }
.st.ratio { width: 24px; gap: 3px; }
.si { width: 16px; }
.status .si.on { background: #5a93c4; }
.sc { width: 11px; }
.ssep { width: 1px; }

.taskbar { flex: none; height: 32px; display: grid; grid-template-columns: 1fr auto 1fr; align-items: center; background: #dcdcdc; color: #222; }
.weather { padding-left: 12px; gap: 3px; text-align: left; }
.weather small { display: block; font-size: 8px; color: #5a5a5a; }
.center { display: flex; align-items: center; }
.startb { width: 24px; justify-content: center; margin-right: 5px; }
.search { width: 145px; height: 20px; border-radius: 10px; background: #f3f3f3; border: 1px solid #cfcfcf; display: flex; align-items: center; gap: 6px; padding: 0 1px 0 6px; margin-right: 4px; }
.search input { flex: 1; font-size: 9px; outline: 0; }
.search input::placeholder { color: #666; opacity: 1; }
.apps { width: 377px; display: flex; justify-content: space-between; }
.app { position: relative; width: 24px; height: 24px; justify-content: center; border-radius: 2px; }
.app.active { background: #f0eeee; }
.app.run::after { content: ""; position: absolute; left: 50%; bottom: -1px; width: 4px; height: 2px; margin-left: -2px; border-radius: 1px; background: #7b7b7b; }
.app.active::after { width: 10px; margin-left: -5px; background: #0b72c4; }
.badge { position: absolute; right: 0; top: 1px; width: 9px; height: 9px; border-radius: 5px; background: #dc3c44; color: #fff; font-size: 8px; line-height: 9px; text-align: center; }
.tray { display: flex; justify-content: flex-end; align-items: center; gap: 4px; padding-right: 13px; }
.tray .mic { margin: 0 6px; }
.tray time { width: 42px; text-align: right; }
</style>
